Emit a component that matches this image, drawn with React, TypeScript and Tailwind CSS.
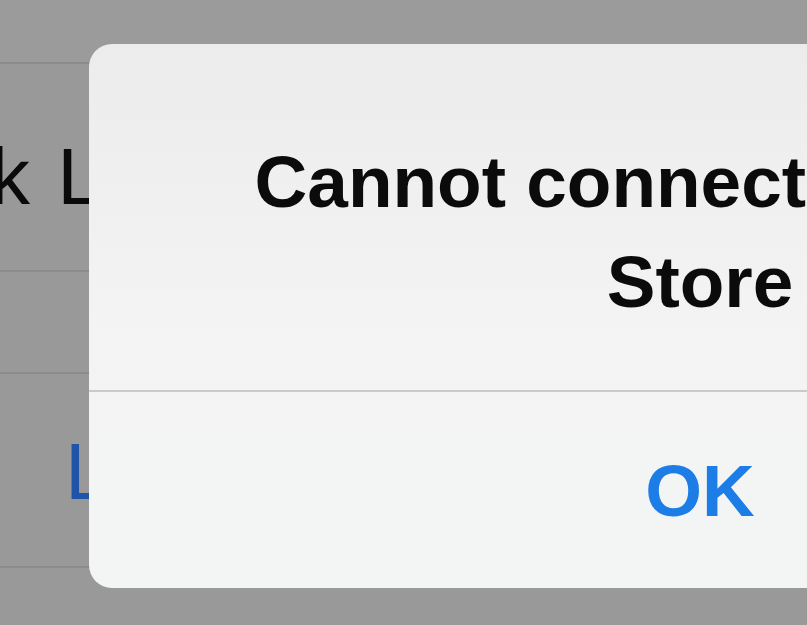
import React from 'react';

const sans = "font-['Liberation_Sans',Arial,sans-serif]";

function Divider() {
  return <div className="h-[2px] w-full bg-[#8b8b8b]" />;
}

function AlertDialog({ title, action }: { title: string; action: string }) {
  return (
    <div className="absolute left-[89px] top-[44px] flex h-[544px] w-[1222px] flex-col overflow-hidden rounded-[23px] bg-gradient-to-b from-[#ececec] via-[#f3f3f3] to-[#f3f5f5]">
      {/* Title */}
      <div className="px-[64px] pt-[88px] pb-[58px] text-center">
        <h2 className="text-[73px] leading-[100px] font-bold text-[#0b0b0b]">{title}</h2>
      </div>
      <div className="h-[2px] w-full bg-[#c9cbcb]" />
      {/* Action */}
      <button className="flex flex-1 items-center justify-center text-[73px] leading-none font-bold text-[#1c7de6]">
        {action}
      </button>
    </div>
  );
}

export default function App() {
  return (
    <div className={`relative h-[625px] w-full overflow-hidden bg-[#999999] ${sans}`}>
      {/* Settings list behind the alert */}
      <div className="flex flex-col">
        <div className="h-[62px] bg-[#9b9b9b]" />
        <Divider />
        <div className="flex h-[206px] items-center pt-[20px] whitespace-nowrap">
          <span className="-ml-[10px] text-[80px] leading-none text-[#0a0a0a] [word-spacing:5px]">k Library</span>
        </div>
        <Divider />
        <div className="h-[100px]" />
        <Divider />
        <div className="flex h-[192px] items-center pt-[4px] whitespace-nowrap">
          <span className="ml-[65px] text-[80px] leading-none text-[#1f55a8]">Log In</span>
        </div>
        <Divider />
      </div>

      <AlertDialog title="Cannot connect to iTunes Store" action="OK" />
    </div>
  );
}
